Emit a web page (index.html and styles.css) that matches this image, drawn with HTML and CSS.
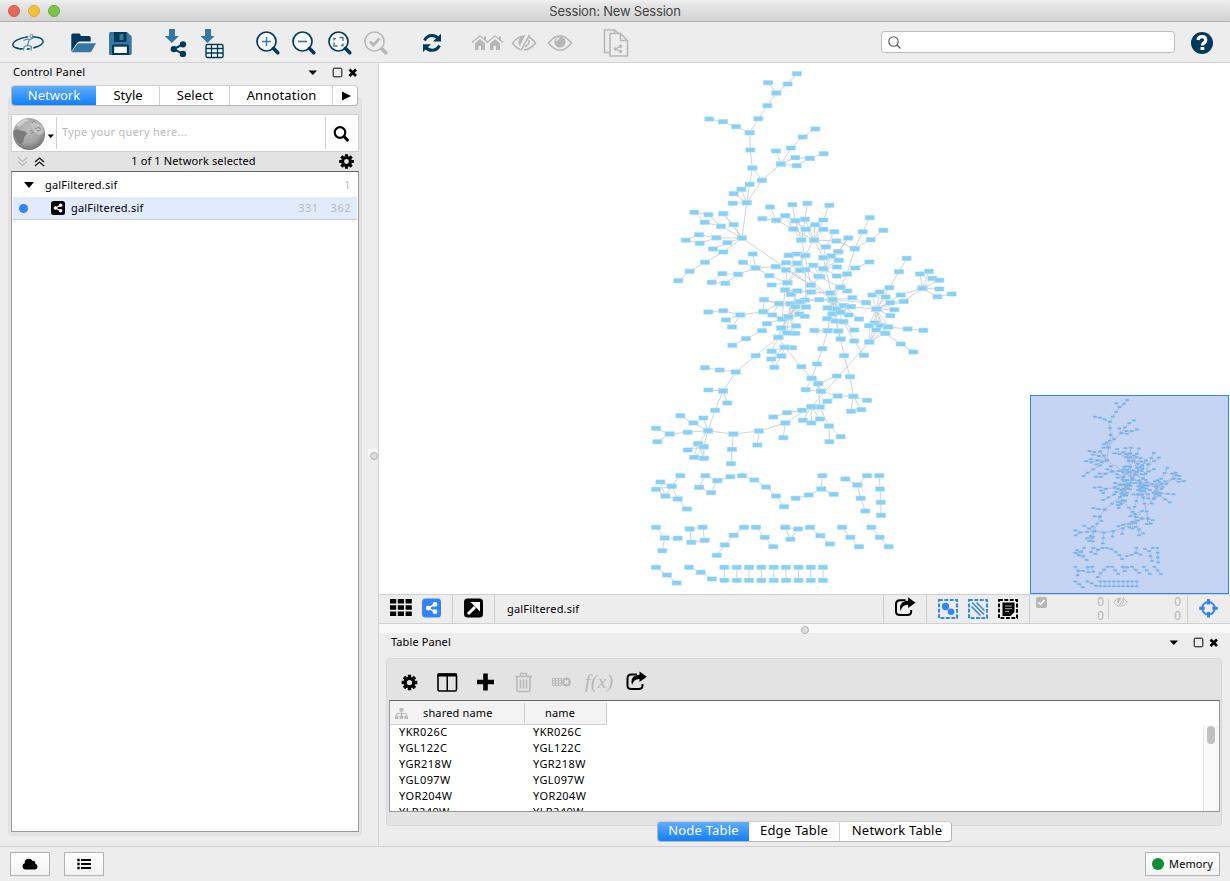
FILE: index.html
```
<!DOCTYPE html>
<html lang="en">
<head>
<meta charset="utf-8">
<title>Session: New Session</title>
<link rel="stylesheet" href="styles.css">
</head>
<body>
<svg class="defs" width="0" height="0" aria-hidden="true">
  <defs>
    <marker id="node" markerUnits="userSpaceOnUse" markerWidth="12" markerHeight="8" refX="6" refY="4" viewBox="0 0 12 8">
      <rect x="1" y="1.5" width="10" height="5" fill="#b9e2f9"/>
      <rect x="1.7" y="2" width="8.6" height="4" fill="#89d0f5"/>
    </marker>
    <path id="graph" class="graph" d="
      M797 73.7L787.7 84L776.3 93L768 82.7M776.3 93L767.3 105.7L758.3 118.7L749.7 132.7L736 126.7L723 121.7L709.3 119
      M749.7 132.7L750.3 150L752.3 168L762 180.3L781 164L776 151M781 164L791 148L802.7 137L815.3 129
      M781 164L795.3 157.7L809.7 158.3L823.7 153.7M809.7 158.3L796.7 165.7L781 164
      M752.3 168L749.7 184.3L746.7 202.7L762 180.3M741.3 189.3L746.7 202.7L733.7 193.7M732.7 203.3L746.7 202.7L742 238
      M742 238L721 226.3L704.7 222.3L694.3 212.3L708.3 214.7L721 226.3M723.3 213.7L733.7 224.7L742 238L723.3 213.7
      M742 238L716.3 237.8L699 234.8L685.7 240.2L699.7 243.3L716.3 237.8M742 238L727.3 242.7L713 249M742 238L723.3 252L705 262.3L689.7 271.3L678.3 280.7
      M742 238L810.7 285L832.7 299.7
      M752.7 254L755.7 268L743 262.3M775.7 266.7L755.7 268L738 274.3L722.3 273.7L711.7 282.3L725.3 283.3L738 274.3
      M755.7 268L769.3 275.7L787.3 282.7L771.7 285M787.3 282.7L785 290L782 319M775.7 266.7L786 270L787.3 282.7L800 270.3
      M770 207L776.3 220.3L762.3 218.7M785.3 215.7L793.3 229L776.3 220.3M785.3 215.7L805.7 229.3M792.3 204.7L795.3 220.7L801.3 240L805 219.3L807.3 203.3
      M795.3 220.7L805.7 229.3L814 240L793.3 229L801.3 240L805.7 229.3M805 219.3L814 240L815 224.7M829.3 205.3L823.3 220L814 240L823.3 229.3L834.3 231.7L825.7 247
      M814 240L836.3 241L854.7 248.7L862.7 231.7L869.7 217.7M854.7 248.7L870.7 239.7L883.3 230.3M854.7 248.7L847 274L840.3 287.3
      M848.3 238L838.3 251.7L831 256L823.3 268.7L838.3 251.7M848.3 238L838.3 251.7M814 240L825.7 247L823.3 257.7L814 240L805 255.7L801.3 240
      M838.7 260.3L823.3 268.7L837 267M831 256L838.7 260.3M823.3 257.7L832.7 299.7M869.3 262L855.3 268L847 274L836.7 276L823.3 268.7L820.3 276.7L813.3 265.3L805.3 269.7
      M788.7 255.3L796.7 254L805.3 255.3L797.3 263.3L786 262.7L800 270.3L805.3 269.7L806 307M786 270L797.3 263.3M805 255.7L810.7 285L820.3 276.7
      M788.7 255.3L797.3 263.3L818.3 276.3L840.3 287.3M805.3 255.3L787.3 282.7M786 270L810.7 285L811 292L797.3 291L785 290M800 270.3L832.7 299.7
      M791 294.3L797.3 291L788.3 316.7L799.7 301.7L811 292L830.3 293M785 290L791 294.3L799.7 301.7L819.3 299.7L832.7 299.7L805 300L788.3 316.7
      M764 299.7L763.3 311.7L779 303.7L764 299.7L779 303.7L790.3 303.7L799.7 301.7M779 303.7L772.3 315L763.3 311.7L740.3 315L723.3 310.7L708.3 312M726 320L740.3 315L732 327
      M763.3 311.7L782 319M790.3 303.7L788.3 316.7L795.3 306.7L806 307L788.3 316.7L799.3 314L804.7 316.3L788.3 316.7L782 319L767 323.7L762 330.7L746 338.7L732.3 345.3
      M788.3 316.7L781.3 328L778.3 337.3L788.3 316.7L787.3 333L795.3 333.3L788.3 316.7L796 326L781.3 328M796 326L787.3 333M799.7 301.7L781.3 328
      M778.3 337.3L784.7 347.3L792 347.7M778.3 337.3L771.7 351.3L781.3 356L784.7 347.3L771.3 359L774.3 367.3L781.3 356M784.7 347.3L771.7 351.3
      M778.3 337.3L755.7 355.7L735.7 372L719.7 370L705 367.7M735.7 372L723 391L708.3 390M723 391L727.3 403M723 391L715 410.3L708 430.7
      M784.7 347.3L801.3 366.7L811.7 378.3L817 364L822.3 348.7L827.7 330.7L814.5 330.5M827.7 330.7L838.3 331L840.7 339
      M832.7 299.7L830.3 293L840.3 287.3L847.3 291M832.7 299.7L840.3 287.3M832.7 299.7L852.3 297.7L866 302.7L876.3 309L851 306.7L843.7 305.7L832.7 299.7L827.7 308L836.7 309L832.7 299.7
      M832.7 299.7L866 302.7M832.7 299.7L832.3 314L840.3 312.3L832.7 299.7L848.7 315L836.7 309M832.7 299.7L827.3 318.7L835.7 321L832.7 299.7L843.3 321.7L854.3 330M843.7 305.7L859 319
      M836.7 309L827.7 308L832.3 314L843.7 305.7L827.3 318.7M832.7 299.7L840.3 312.3L851 306.7M832.7 299.7L838.3 331M835.7 321L840.7 339L844 355.7L850 376.7L853.3 396.3M843.3 321.7L854.3 341L864 355.3M832.7 299.7L827.7 330.7
      M876.3 309L872.3 295M879.7 292L876.3 309L889.3 287.7L899 271.7L906.7 258.3M885.7 297L876.3 309L900.7 295L922.3 288.3L920 274M929 271.3L922.3 288.3L932.3 278.3L939.3 280.3L922.3 288.3L939.3 289M922.3 288.3L937.3 296.7L951.7 294
      M903.7 301.3L876.3 309L890.3 302.7L903.7 301.3L922.3 288.3M894.3 309.7L876.3 309L890.3 315.7M876.3 309L874.7 323L869.3 342L869 325.7L876.3 309L880.7 325.7L869.3 342L885.3 333.3L876.3 309L876.3 330L869.3 342L888.3 327L876.3 309
      M888.3 327L907.7 329L923.3 330.3M885.3 333.3L900.7 344L913.3 352M869.3 342L811.3 406.7M836.7 376L818.3 383.7L811.7 378.3L805.7 389.7L821 391.3L818.3 383.7L819.7 407M821 391.3L837.7 396L853.3 396.3L867 400.3M861.3 409.7L853.3 396.3L851 411.3M837.7 396L827.3 401.3
      M811.7 378.3L821 391.3M811.3 406.7L819.7 407L829 426L829.3 441.7M829 426L840.7 436.7M811.3 406.7L802 410.3L787 412.7L773.3 417M811.3 406.7L803 420.3M811.3 406.7L811.3 423M811.3 406.7L820 419M811.3 406.7L785.3 423L783.3 437.7M785.3 423L759 431L757.3 445M759 431L733.3 434L732 449.3L731 463.7
      M733.3 434L708 430.7L703.3 418M708 430.7L693.3 423L680.3 415.7M708 430.7L687.7 432.3L669.7 434L656 428.3M669.7 434L657.3 441.7M708 430.7L698 443.7L687.7 450L703.7 446.7L708 430.7M698 443.7L694 457.3L703.7 446.7L704 458.3L698 443.7L703.7 446.7
      M680.3 475.7L671.7 486.3L660.3 482L665.3 496L671.7 486.3L656 489.3L665.3 496L677.7 499L671.7 486.3M677.7 499L687 509
      M730.3 476.7L717.3 480.7L705.3 475.7L699 487.3L711 492.7L717.3 480.7
      M742 475.7L754.3 480L766 487L776 496L784 506.7M822.3 475.7L821.3 489L833.7 494.3M821.3 489L808.7 495L795.7 498.3
      M845.3 479L857.3 485L867 475.7M857.3 485L860.7 498.3L865.3 511M879.3 475.7L880 489L880.7 502.3L881 515.3
      M656 527.3L664.7 538L677.7 538.3M664.7 538L662.3 550.7M689.7 529L702.7 527.3L704.7 540.3L691.3 542.3L689.7 529
      M744 527.3L733.7 535.3L724.7 545L716.7 555.3M756 527.3L764.7 537.3L773.3 546.7M785.3 527.3L798 529L790.3 539.3L785.3 527.3
      M810 527.3L820.3 535.7L830 544M842 527.3L850.3 537.3L859 546.7M871.3 527.3L879.7 537.3L888.7 546.7
      M656 567.3L667 575L676.7 583M689 567.3L700.7 572.3L712 579
      M724.3 567.3V580.3M736.7 567.3V580.3M749 567.3V580.3M761.3 567.3V580.3M773.7 567.3V580.3M786 567.3V580.3M798.5 567.3V580.3M810.8 567.3V580.3M823 567.3V580.3"/>
    <g id="share"><path d="M14.5 4.5L5 9.5L14.5 14.5" fill="none" stroke="currentColor" stroke-width="2.2"/><circle cx="14.5" cy="4.5" r="3.3"/><circle cx="5" cy="9.5" r="3.3"/><circle cx="14.5" cy="14.5" r="3.3"/></g>
    <g id="lens"><circle cx="11" cy="11" r="9.5" fill="#fff" stroke="currentColor" stroke-width="1.7"/><path d="M18 18l4.3 4.3" stroke="currentColor" stroke-width="3.6" stroke-linecap="round"/></g>
    <g id="gear"><circle cx="8" cy="8" r="4.2" fill="none" stroke="currentColor" stroke-width="3.2"/><g stroke="currentColor" stroke-width="3.4"><path d="M8 .2v3M8 12.800v3M.2 8h3M12.800 8h3M2.500 2.500l2 2M11.500 11.500l2 2M13.500 2.500l-2 2M4.500 11.500l-2 2"/></g></g>
    <g id="export"><path d="M11 3.500H5.500Q1.500 3.500 1.500 7.500V14.500Q1.500 18 5.500 18H12.500Q16.500 18 16.500 14.500V13" fill="none" stroke="currentColor" stroke-width="2"/><path d="M13.500 .5L20.800 5.800L13.500 11V8Q8 7.500 6 14Q3.500 4.500 13.500 3.800Z"/></g>
    <g id="eye"><path d="M1 8Q7 .8 12.500 .8Q18 .8 24 8Q18 15.200 12.500 15.200Q7 15.200 1 8Z" fill="none" stroke="currentColor" stroke-width="1.6"/><circle cx="12.500" cy="7" r="5.600"/><path d="M9 6Q9.500 3.500 12 3.200" fill="none" stroke="#eee" stroke-width="1.2"/></g>
    <g id="noeye"><path d="M9 14.500Q4.500 13 1 8Q7 .8 13.500 1M17 2Q20.500 3.500 24 8Q19 14.500 12.500 15" fill="none" stroke="currentColor" stroke-width="1.600"/><path d="M13 1.400A5.600 5.600 0 0 0 8.600 11Z"/><path d="M18 0L9.500 15.700" stroke="currentColor" stroke-width="1.600"/><path d="M17.800 5Q17.500 10 13.500 12" fill="none" stroke="currentColor" stroke-width="1.500"/></g>
    <g id="wincontrols"><path d="M.5 4.500h8.500l-4.200 4.500z"/><rect x="25.200" y="2.200" width="8.600" height="8.600" rx="1" fill="none" stroke="currentColor" stroke-width="1"/><path d="M41.500 3.500l6.500 6.500M48 3.500l-6.500 6.500" stroke="currentColor" stroke-width="2.700"/></g>
  </defs>
</svg>

<div class="app">
  <header class="titlebar">
    <div class="lights"><i class="light red"></i><i class="light yellow"></i><i class="light green"></i></div>
    <span class="window-title">Session: New Session</span>
  </header>

  <div class="toolbar">
    <svg width="56" height="40" viewBox="0 22 56 40" fill="none">
      <ellipse cx="28" cy="43" rx="15.200" ry="6" transform="rotate(-7 28 43)" stroke="#00496f" stroke-width="1.500"/>
      <path d="M16 47.500Q23 50.500 36 47" stroke="#00496f" stroke-width="1"/>
      <path d="M24 39.500l4.500 1 3.500-1.500M28.500 40l-1 5-4 6M27.500 45l4 2.500 1 4M31 35.500l-2 3" stroke="#eee" stroke-width="3.500"/>
      <path d="M23.500 40.500l3.500-1.500 3 .5 3-1.500M29.500 39l-2 6-3.500 2-.5 3.500M27.500 45l4 1.500-.5 4" stroke="#4583a9" stroke-width="1.100"/>
      <circle cx="31.500" cy="36" r="1.600" stroke="#4583a9" stroke-width=".9"/>
    </svg>
    <svg width="46" height="40" viewBox="56 22 46 40">
      <path d="M71.300 51.500V35q0-1.500 1.500-1.500h6.500q1.500 0 1.500 2.500h8q1.900 0 1.900 2v3.500H80q-2 0-3.500 2z" fill="#00395c"/>
      <path d="M79 43.300H96l-4.300 7.700q-.8 1.300-2.500 1.300H71.500l5-7.500q1-1.500 2.500-1.500z" fill="#3778a2"/>
    </svg>
    <svg width="46" height="40" viewBox="102 22 46 40">
      <path d="M110.500 32H127l4.700 4.500V53.500q0 1.500-1.500 1.500H110.500q-1.500 0-1.500-1.500V33.500q0-1.500 1.500-1.500z" fill="#3778a2"/>
      <path d="M114 32h12.500v9q0 1-1 1H115q-1 0-1-1z" fill="#00395c"/><rect x="119.500" y="34" width="4" height="6" fill="#3778a2"/>
      <path d="M112 55v-9q0-1.500 1.500-1.500h14q1.500 0 1.500 1.500v9z" fill="#00395c"/><rect x="114.200" y="46.700" width="12.600" height="6.300" fill="#fff"/>
    </svg>
    <svg width="46" height="40" viewBox="148 22 46 40">
      <path d="M169 29h6v7h4l-7.200 7-7-7h4.200z" fill="#3778a2"/>
      <use href="#share" transform="translate(169 40) scale(.96)" color="#00395c" fill="#00395c"/>
    </svg>
    <svg width="46" height="40" viewBox="194 22 46 40">
      <path d="M205 29h6v7h3.500l-7 7-7-7h4.500z" fill="#3778a2"/>
      <rect x="206" y="44.500" width="17" height="13" rx="1.500" fill="#fff" stroke="#00395c" stroke-width="1.400"/>
      <path d="M206 48.500h17M206 53h17M211.500 45v13M217.500 45v13" stroke="#00395c" stroke-width="1.300"/>
    </svg>
    <svg width="46" height="40" viewBox="240 22 46 40" color="#00395c"><use href="#lens" x="255.500" y="30.500"/><path d="M262 41.500h9M266.500 37v9" stroke="#3778a2" stroke-width="1.500"/></svg>
    <svg width="36" height="40" viewBox="286 22 36 40" color="#00395c"><use href="#lens" x="291.500" y="30.500"/><path d="M298 41.500h9" stroke="#3778a2" stroke-width="1.700"/></svg>
    <svg width="36" height="40" viewBox="322 22 36 40" color="#00395c"><use href="#lens" x="327.500" y="30.500"/><path d="M339.500 37.500h3.500v3.500M337.500 46h-3.500v-3.500M334 40.500v-2h2M343 43.500v2h-2" fill="none" stroke="#3778a2" stroke-width="1.400"/></svg>
    <svg width="36" height="40" viewBox="358 22 36 40" color="#b7b7b7"><use href="#lens" x="363.500" y="30.500"/><circle cx="374.500" cy="41.500" r="8.500" fill="#eee"/><path d="M370 41.500l3.500 3.500 6-6.500" fill="none" stroke="#b7b7b7" stroke-width="2.700"/></svg>
    <svg width="60" height="40" viewBox="394 22 60 40"><path d="M424.500 40.500Q427 35.500 432 35.500Q436 35.500 438.500 39M439.500 45.500Q437 50.300 432 50.300Q428 50.300 425.500 47" fill="none" stroke="#00395c" stroke-width="3"/><path d="M441 33.800v7.700h-8zM423 52v-7.700h8z" fill="#00395c"/></svg>
    <svg width="52" height="40" viewBox="454 22 52 40"><g id="house" fill="#b7b7b7"><path d="M472.500 43l7.500-6.500 7.500 6.500 1-1-2.500-2v-3.500h-2v2L480 35l-8.500 7z"/><path d="M475 43.500l5-4.500 5 4.500v6.500h-4v-4h-2.500v4H475z"/></g><use href="#house" x="15"/></svg>
    <svg width="36" height="40" viewBox="506 22 36 40" color="#b7b7b7" fill="#b7b7b7"><use href="#noeye" x="511.500" y="35"/></svg>
    <svg width="36" height="40" viewBox="542 22 36 40" color="#b7b7b7" fill="#b7b7b7"><use href="#eye" x="547.500" y="35"/></svg>
    <svg width="56" height="40" viewBox="578 22 56 40" fill="none" stroke="#b7b7b7" stroke-width="1.600"><path d="M610 52.500h-5.500V30h10l5.500 4.500M614.500 30v3"/><path d="M610 33.500h10.500l7 7V56H610zM620.500 33.500v7h7" fill="#eee"/><use href="#share" transform="translate(613 44) scale(.52)" fill="#b7b7b7" color="#b7b7b7" stroke="none"/></svg>
    <div class="search"><svg width="14" height="14" viewBox="0 0 14 14" fill="none" stroke="#555" stroke-width="1.100"><circle cx="5.500" cy="5.500" r="4.700"/><path d="M9 9l3.500 3.500"/></svg></div>
    <svg class="help" width="24" height="24" viewBox="0 0 24 24"><circle cx="12" cy="12" r="11" fill="#00395c"/><path d="M8 9Q8.500 5.700 12 5.700Q15.800 5.700 15.800 9Q15.800 11 13.800 12Q12.500 12.700 12.500 14.500" fill="none" stroke="#fff" stroke-width="3.200"/><rect x="10.500" y="16" width="3.800" height="3" fill="#fff"/></svg>
  </div>

  <main class="main">
    <aside class="control">
      <div class="panel-head"><span class="t-control">Control Panel</span><svg width="49" height="13" viewBox="0 0 49 13"><use href="#wincontrols"/></svg></div>
      <div class="tabs ctabs"><span class="tab on w-network">Network</span><span class="tab w-style">Style</span><span class="tab w-select">Select</span><span class="tab w-ann">Annotation</span><span class="tab w-more"><svg width="9" height="10"><path d="M0 .5L9 5L0 9.500z"/></svg></span></div>
      <div class="control-body">
        <div class="query">
          <svg width="44" height="37" viewBox="12 114 44 37">
            <defs><radialGradient id="globe" cx=".45" cy=".35" r=".65"><stop offset="0" stop-color="#bdbdbd"/><stop offset=".65" stop-color="#a4a4a4"/><stop offset="1" stop-color="#737373"/></radialGradient></defs>
            <circle cx="29" cy="133" r="16" fill="url(#globe)"/>
            <path d="M13.200 130l4-2 3 1.500 5 1 2 2-3 3.500-1 5-3 2.500q-6-4-7-13.500z" fill="#7b7b7b"/>
            <path d="M16 124q5-6 11-6l2 2-4 1-2 2-4 3z" fill="#cfcfcf"/><path d="M29 123l6-3 7 5 2 6-4 3-6-3-2-4z" fill="#c1c1c1"/>
            <path d="M32 122l2-2 2 2M35 128l4-2 2 3-4 1M30 129l3 2-2 2" fill="none" stroke="#8d8d8d"/>
            <path d="M47.500 133.500h6.500l-3.200 3.500z"/>
          </svg>
          <span class="query-text">Type your query here...</span>
          <svg width="32" height="31" viewBox="0 0 32 31" class="query-go"><circle cx="14" cy="14.500" r="5.300" fill="none" stroke="#000" stroke-width="2.200"/><path d="M18 18.500l4.300 4.500" stroke="#000" stroke-width="3"/></svg>
        </div>
        <div class="net-status">
          <svg width="36" height="20" viewBox="11 151 36 20" fill="none"><path d="M18 156.500l4.500 4 4.500-4M18 160.500l4.500 4 4.500-4" stroke="#b9b9b9" stroke-width="1.200"/><path d="M35 161l4.500-4 4.500 4M35 165l4.500-4 4.500 4" stroke="#111" stroke-width="1.300"/></svg>
          <span class="t-selected">1 of 1 Network selected</span>
          <svg class="gear-s" width="15" height="15" viewBox="0 0 16 16"><use href="#gear"/></svg>
        </div>
        <div class="tree">
          <div class="tree-row"><svg width="10" height="6"><path d="M0 0h10L5 6z"/></svg><span class="name root">galFiltered.sif</span><span class="cnt one">1</span></div>
          <div class="tree-row sel"><i class="dot"></i><svg class="tree-icon" width="14" height="14" viewBox="0 0 14 14"><rect width="14" height="14" rx="2.500"/><use href="#share" transform="translate(1.800 1.900) scale(.54)" fill="#fff" color="#fff"/></svg><span class="name">galFiltered.sif</span><span class="cnt">331</span><span class="cnt last">362</span></div>
        </div>
      </div>
      <i class="grip"></i>
    </aside>

    <section class="right">
      <div class="network">
        <svg width="851" height="531" viewBox="379 63 851 531"><use href="#graph" class="graph-main"/></svg>
        <svg class="overview" width="199" height="199" viewBox="535.500 62.700 536 536"><use href="#graph" class="graph-mini"/><rect x="535" y="62" width="538" height="538" fill="#3366d4" opacity=".28"/></svg>
      </div>
      <div class="netbar">
        <div class="cell c1"><svg width="73" height="28" viewBox="379 595 73 28"><g fill="#000"><path d="M390 599h6.200v4.500H390zM397.800 599h6.200v4.500h-6.200zM405.600 599h6.200v4.500h-6.200zM390 605.300h6.200v4.500H390zM397.800 605.300h6.200v4.500h-6.200zM405.600 605.300h6.200v4.500h-6.200zM390 611.600h6.200v4.500H390zM397.800 611.600h6.200v4.500h-6.200zM405.600 611.600h6.200v4.500h-6.200z"/></g><rect x="422" y="598.500" width="19" height="19" rx="3.500" fill="#3383fb"/><use href="#share" transform="translate(424.500 601.200) scale(.72)" fill="#fff" color="#fff"/></svg></div>
        <div class="cell c2"><svg width="41" height="28" viewBox="453 595 41 28"><rect x="464" y="598.500" width="19" height="19" rx="3.500"/><path d="M468 614l7-7" stroke="#fff" stroke-width="3"/><path d="M470.500 602H480v9.500z" fill="#fff"/></svg></div>
        <div class="cell c3">galFiltered.sif</div>
        <div class="cell c4"><svg width="42" height="28" viewBox="884 595 42 28"><use href="#export" transform="translate(894.500 596.800) scale(1.010)"/></svg></div>
        <div class="cell c5"><svg width="102" height="28" viewBox="927 595 102 28">
          <g fill="none" stroke-width="2" stroke-dasharray="3.800 1.600"><rect x="939" y="600" width="18" height="18" stroke="#3383fb"/><rect x="969" y="600" width="18" height="18" stroke="#3383fb"/><rect x="999" y="600" width="18" height="18" stroke="#000"/></g>
          <circle cx="945.500" cy="606.500" r="3.700" fill="#3383fb"/><circle cx="951" cy="611.800" r="3.300" fill="#3383fb"/>
          <path d="M972 602.500l12 12M976.500 602.500l8 8M971.500 606.500l9 9" stroke="#3383fb" stroke-width="1.500"/>
          <path d="M1002.500 602.500h12v9.500l-4 4h-8z"/><path d="M1005 606h7M1005 608.700h7M1005 611.400h4" stroke="#ddd" stroke-width=".8"/>
        </svg></div>
        <div class="cell c6"><svg class="chk" width="11" height="11" viewBox="0 0 11 11"><rect width="11" height="11" rx="2" fill="#b7b7b7"/><path d="M2.500 5.500l2 2 4-4.500" fill="none" stroke="#fff" stroke-width="1.500"/></svg><span class="zeros z1">0<br>0</span><i class="vline"></i><svg class="he" width="15" height="11" viewBox="0 0 25 17" fill="#b7b7b7" color="#b7b7b7"><use href="#noeye"/></svg><span class="zeros z2">0<br>0</span></div>
        <div class="cell c7"><svg width="41" height="28" viewBox="1188 595 41 28" fill="none" stroke="#3383fb"><circle cx="1208.500" cy="608.300" r="6.300" stroke-width="1.800"/><path d="M1208.500 599v5.500M1208.500 612.100v5.500M1199.200 608.300h5.500M1212.300 608.300h5.500" stroke-width="3"/></svg></div>
      </div>
      <div class="hsplit"><i class="grip-h"></i></div>
      <div class="table-panel">
        <div class="panel-head"><span class="t-table">Table Panel</span><svg width="49" height="13" viewBox="0 0 49 13"><use href="#wincontrols"/></svg></div>
        <div class="table-box">
          <svg class="table-tools" width="270" height="41" viewBox="390 659 270 41">
            <use href="#gear" x="401.500" y="674.500"/>
            <rect x="438" y="674" width="18.500" height="17" rx="1.500" fill="none" stroke="#000" stroke-width="1.600"/><path d="M437.500 673.500h19.500v3h-19.500zM446.500 675h1.500v16h-1.500z"/>
            <path d="M477 682h17M485.500 673.500v17" stroke="#000" stroke-width="4.600"/>
            <g fill="none" stroke="#b9b9b9" stroke-width="1.500"><path d="M515 676.500h17M520.500 676v-2.500h6v2.500M517 677v13q0 1.500 1.500 1.500h10q1.500 0 1.500-1.500v-13M520.500 679.500v9M523.500 679.500v9M526.500 679.500v9"/></g>
            <g stroke="#b9b9b9" fill="none"><path d="M552.500 678.500h9v7h-9zM552.500 680.700h9M552.500 683.200h9M555.500 678.500v7M558.500 678.500v7"/></g><circle cx="566.500" cy="682" r="4.600" fill="#b9b9b9"/><path d="M564.700 680.200l3.600 3.600M568.300 680.200l-3.600 3.600" stroke="#eee" stroke-width="1.300"/>
            <text x="585" y="688" class="fx" textLength="28">f(x)</text>
            <use href="#export" transform="translate(626 671)"/>
          </svg>
          <div class="table">
            <div class="thead"><div class="th th1"><svg width="13" height="11" viewBox="0 0 13 11" fill="#bbb"><path d="M4.500 0h4v3.500h-4zM0 7.500h3.500V11H0zM4.700 7.500h3.500V11H4.700zM9.400 7.500h3.500V11H9.400z"/><path d="M6.500 3v5M1.800 7.500v-2h9.400v2" fill="none" stroke="#bbb"/></svg><span>shared name</span></div><div class="th th2"><span>name</span></div></div>
            <div class="rows">
              <div class="tr"><span>YKR026C</span><span>YKR026C</span></div>
              <div class="tr"><span>YGL122C</span><span>YGL122C</span></div>
              <div class="tr"><span>YGR218W</span><span>YGR218W</span></div>
              <div class="tr"><span>YGL097W</span><span>YGL097W</span></div>
              <div class="tr"><span>YOR204W</span><span>YOR204W</span></div>
              <div class="tr"><span>YLR249W</span><span>YLR249W</span></div>
              <div class="scroll"><i class="thumb"></i></div>
            </div>
          </div>
        </div>
        <div class="tabs ttabs"><span class="tab on w-node">Node Table</span><span class="tab w-edge">Edge Table</span><span class="tab w-net">Network Table</span></div>
      </div>
    </section>
  </main>

  <footer class="statusbar">
    <span class="btn"><svg width="16" height="12" viewBox="0 0 16 12"><path d="M4 11.500Q.5 11.500.5 8.300Q.5 6 2.700 5.300Q2.500 .8 6.800.8Q9.500.8 10.500 2.800Q13.500 2.500 13.300 5.800Q15.500 6.500 15.500 8.500Q15.500 11.500 12.500 11.500Z"/></svg></span>
    <span class="btn"><svg width="14" height="12" viewBox="0 0 14 12"><path d="M4 1h10v2H4zM4 5h10v2H4zM4 9h10v2H4zM.3.8h2.400v2.400H.3zM.3 4.800h2.400v2.400H.3zM.3 8.800h2.400v2.400H.3z"/></svg></span>
    <span class="btn memory"><i></i>Memory</span>
  </footer>
</div>
</body>
</html>
```

FILE: styles.css
```
* { box-sizing: border-box; }
body { margin: 0; width: 1230px; height: 881px; overflow: hidden; background: #ededed; color: #000; font: 11px/14px "Noto Sans", "Open Sans", sans-serif; }
svg { display: block; flex: none; }
.defs { position: absolute; }
.app { display: flex; flex-direction: column; height: 881px; }
.graph { fill: none; marker-start: url(#node); marker-mid: url(#node); marker-end: url(#node); }
.graph-main { stroke: #c8c8c8; stroke-width: .8; }
.graph-mini { stroke: #bbb; stroke-width: 1.400; }

.titlebar { display: flex; align-items: center; height: 22px; position: relative; background: linear-gradient(#f1f1f1, #e6e6e6 20%, #d2d2d2); border-bottom: 1px solid #b1b1b1; border-radius: 5px 5px 0 0; }
.lights { display: flex; gap: 8px; padding-left: 8px; }
.light { width: 12px; height: 12px; border-radius: 50%; border: 1px solid; }
.red { background: #e3695b; border-color: #cf594c; }
.yellow { background: #f2c13c; border-color: #d9a832; }
.green { background: #7ac643; border-color: #63ab34; }
.window-title { position: absolute; left: 0; right: 0; text-align: center; font: 13px/20px Inter, sans-serif; color: #444; letter-spacing: -.2px; top: 1px; }

.toolbar { display: flex; align-items: center; height: 41px; border-bottom: 1px solid #d2d2d2; flex: none; }
.search { width: 294px; height: 22px; margin-left: 247px; background: #fff; border: 1px solid #bdbdbd; border-radius: 3.500px; padding: 4px 6px; }
.help { margin-left: 15px; margin-top: 2px; }

.main { display: flex; height: 783px; flex: none; }
.control { width: 379px; border-right: 1px solid #d2d2d2; position: relative; padding: 0 17px 0 8px; }
.panel-head { display: flex; align-items: center; justify-content: space-between; }
.control .panel-head { height: 20px; padding: 0 4px 0 5px; margin-bottom: 2px; }
.control .panel-head svg { margin-top: -1px; }
.t-control { letter-spacing: .2px; margin-top: -2px; }
.tabs { display: flex; height: 21px; background: #fff; border-radius: 4px; position: relative; border: 1px solid #b5b5b5; border-top-color: #cfcfcf; overflow: hidden; z-index: 1; font-size: 13px; line-height: 19px; }
.ctabs { width: 347px; margin-left: 3px; }
.tab { display: flex; align-items: center; justify-content: center; border-right: 1px solid #d0d0d0; white-space: nowrap; }
.tab:last-child { border-right: 0; }
.tab.on { background: linear-gradient(#61acfc, #1180fc); color: #fff; margin: -1px 0 -1px -1px; border: 1px solid #3a86e0; border-right: 0; border-radius: 4px 0 0 4px; }
.w-network { width: 85px; }
.w-style { width: 64px; padding-left: 1px; }
.w-select { width: 70px; padding-left: 1px; letter-spacing: .1px; }
.w-ann { width: 103px; padding-left: 1px; letter-spacing: .15px; }
.w-more { flex: 1; padding-left: 2px; }
.control-body { height: 739px; margin-top: -9px; background: #e3e3e3; border: 1px solid #dfdfdf; border-radius: 4px; padding: 16px 2px 3px; display: flex; flex-direction: column; width: 354px; }
.query { display: flex; align-items: center; height: 38px; border: 1px solid #cfcfcf; background: #fff; flex: none; }
.query-text { border-left: 1px solid #d0d0d0; border-right: 1px solid #d0d0d0; height: 32px; flex: 1; color: #bbb; line-height: 30px; padding-left: 5px; letter-spacing: .27px; }
.query-go { margin-top: 1px; }
.net-status { height: 19px; flex: none; display: flex; align-items: center; justify-content: space-between; padding-right: 5px; letter-spacing: .13px; }
.t-selected { padding-left: 1px; margin-top: -2px; }
.tree { flex: 1; background: #fff; border: 1px solid #999; border-top-color: #666; padding: 1px; }
.tree-row { display: flex; align-items: center; height: 24px; padding: 0 6px 0 11px; }
.tree-row.sel { background: #e2eafd; border-bottom: 1px solid #ccc; height: 23px; padding-left: 6px; }
.name { letter-spacing: .2px; flex: 1; }
.name.root { margin-left: 11px; }
.dot { width: 9px; height: 9px; border-radius: 50%; background: #3383fb; }
.tree-icon { margin: 0 6px 0 23px; }
.cnt { color: #bbb; letter-spacing: .5px; }
.cnt.last { margin-left: 12px; }
.grip { position: absolute; right: 1px; top: 386px; width: 9px; height: 10px; background: #f8f8f8; }
.grip::after, .grip-h::after { content: ""; position: absolute; left: 2px; top: 3px; width: 6px; height: 6px; border: 1px solid #b5b5b5; border-radius: 50%; background: #ddd; }

.right { width: 851px; display: flex; flex-direction: column; }
.network { height: 531px; background: #fff; position: relative; overflow: hidden; }
.overview { position: absolute; right: 1px; bottom: 0; border: 1px solid #3383fb; background: #fff; }
.netbar { display: flex; height: 30px; border-top: 1px solid #d0d0d0; border-bottom: 1px solid #d0d0d0; }
.cell { border-right: 1px solid #d0d0d0; display: flex; }
.cell:last-child { border-right: 0; }
.c1 { width: 74px; }
.c2 { width: 42px; }
.c3 { width: 389px; padding-left: 12px; line-height: 28px; letter-spacing: .18px; }
.c4 { width: 43px; }
.c5 { width: 103px; }
.c6 { width: 158px; color: #b5b5b5; font: 12px/14px "Liberation Sans", sans-serif; }
.c7 { width: 42px; }
.chk { margin: 2px 0 0 6px; }
.zeros { text-align: right; padding-top: 0; }
.z1 { width: 57px; }
.vline { width: 1px; height: 20px; margin: 4px 4px 0; background: #d0d0d0; }
.he { margin-top: 2px; }
.z2 { width: 53px; }
.hsplit { height: 9px; background: #f9f9f9; position: relative; }
.grip-h { position: absolute; left: 420px; top: -1px; width: 10px; height: 9px; }
.table-panel { padding: 0 8px 0 7px; }
.table-panel .panel-head { height: 19px; padding: 0 4px 0 5px; margin-bottom: 6px; }
.t-table { letter-spacing: .1px; margin-top: -2px; }
.table-box { height: 168px; background: #e3e3e3; border: 1px solid #d8d8d8; border-radius: 4px; padding: 0 1px 0 2px; }
.table-tools { margin-left: 1px; height: 41px; }
.fx { font: italic 19px "Liberation Serif", serif; fill: #b5b5b5; }
.table { height: 112px; background: #fff; border: 1px solid #999; border-top-color: #666; overflow: hidden; }
.thead { display: flex; height: 24px; width: 217px; background: #f3f3f3; border-bottom: 1px solid #d0d0d0; padding-top: 2px; }
.th { display: flex; height: 20px; align-items: center; border-right: 1px solid #ccc; letter-spacing: .15px; }
.th1 { width: 135px; padding-left: 5px; }
.th1 span { margin-left: 15px; }
.th2 { width: 82px; padding-left: 20px; }
.rows { position: relative; height: 87px; overflow: hidden; }
.tr { display: flex; height: 16px; line-height: 13px; padding-left: 9px; letter-spacing: .4px; }
.tr span { width: 134px; }
.scroll { position: absolute; right: 1px; top: 0; width: 15px; height: 90px; background: #fafafa; border-left: 1px solid #e5e5e5; border-right: 1px solid #eee; padding: 1px 3px; }
.thumb { display: block; width: 8px; height: 18px; border-radius: 4px; background: #c1c1c1; }
.ttabs { width: 295px; margin: -5px 0 0 271px; line-height: 17px; letter-spacing: .2px; }
.ttabs .tab { padding-bottom: 2px; }
.w-node { width: 92px; }
.w-edge { width: 91px; }
.w-net { flex: 1; padding-left: 3px; }

.statusbar { display: flex; align-items: flex-start; height: 35px; border-top: 1px solid #d0d0d0; padding: 5px 10px 0; gap: 14px; }
.btn { width: 40px; height: 24px; border: 1px solid #b3b3b3; background: linear-gradient(#fff, #f3f3f3); display: flex; align-items: center; justify-content: center; }
.memory { width: 75px; margin-left: auto; gap: 5px; letter-spacing: .1px; }
.memory i { width: 12px; height: 12px; border-radius: 50%; background: #0c9035; }
```
